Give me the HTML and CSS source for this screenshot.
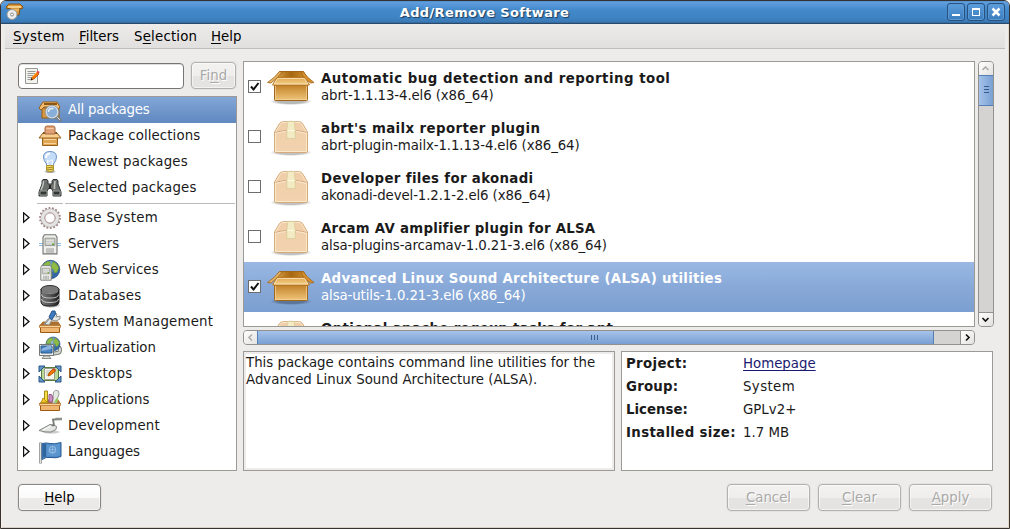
FILE: index.html
```html
<!DOCTYPE html>
<html lang="en">
<head>
<meta charset="utf-8">
<title>Add/Remove Software</title>
<link rel="stylesheet" href="styles.css">
</head>
<body>
<svg class="defs" width="0" height="0" aria-hidden="true">
  <defs>
    <linearGradient id="boxFront" x1="0" y1="0" x2="0" y2="1"><stop offset="0" stop-color="#c28127"/><stop offset="1" stop-color="#f0c67c"/></linearGradient>
    <linearGradient id="boxFlap" x1="0" y1="0" x2="0" y2="1"><stop offset="0" stop-color="#e0a84f"/><stop offset="1" stop-color="#f3cf8e"/></linearGradient>
    <linearGradient id="boxInside"><stop offset="0" stop-color="#dba04b"/><stop offset=".5" stop-color="#a5670f"/><stop offset="1" stop-color="#cf8d2e"/></linearGradient>
    <linearGradient id="paleFront" x1="0" y1="0" x2="0" y2="1"><stop offset="0" stop-color="#f1cda3"/><stop offset="1" stop-color="#f5d9ae"/></linearGradient>
    <radialGradient id="shadow"><stop offset=".6" stop-color="#000" stop-opacity=".35"/><stop offset="1" stop-color="#000" stop-opacity="0"/></radialGradient>
    <linearGradient id="metal"><stop offset="0" stop-color="#777"/><stop offset=".5" stop-color="#555"/><stop offset="1" stop-color="#1c1c1c"/></linearGradient>
    <radialGradient id="sea" cx=".4" cy=".3"><stop offset="0" stop-color="#a9caed"/><stop offset="1" stop-color="#3268a8"/></radialGradient>
    <symbol id="box-open" viewBox="0 0 48 36">
      <ellipse cx="24" cy="31.500" rx="21" ry="3.500" fill="url(#shadow)" opacity=".8"/>
      <path d="M7.500 15h33v14.500q0 1-1 1h-31q-1 0-1-1z" fill="url(#boxFront)" stroke="#a0661a"/>
      <path d="M8.500 16v13.500h31V16" fill="none" stroke="#f4d49c" stroke-opacity=".7"/>
      <path d="M12.500 1.500h24l3.500 6.500H8z" fill="url(#boxInside)" stroke="#a0661a"/>
      <path d="M12.500 1.500 7 7.500 .5 12.500l3.500 .5 6-5 5-6z" fill="#e6b362" stroke="#a0661a" stroke-width=".8"/>
      <path d="M36 1.500 41 7.500l6 5-3.500 .5-6.500-5-3-6z" fill="#d78f2b" stroke="#a0661a" stroke-width=".8"/>
      <path d="M10 7.500h28l4.500 7.500H5.500z" fill="url(#boxFlap)" stroke="#b67a2a"/>
      <path d="M10.500 8.500h27l3.300 5.500H7.200z" fill="none" stroke="#ffe4b2" stroke-opacity=".8"/>
    </symbol>
    <symbol id="box-closed" viewBox="0 0 48 36">
      <ellipse cx="24" cy="32.500" rx="21" ry="3.500" fill="url(#shadow)" opacity=".7"/>
      <path d="M7.500 12 12.500 3.500q1-1.500 3-1.700Q24 .8 32.500 1.800q2 .2 3 1.700L40.500 12v19q0 1.500-1.500 1.500H9q-1.500 0-1.500-1.500z" fill="url(#paleFront)" stroke="#d4ab7c"/>
      <path d="M8.500 12.500 13.500 4q.8-1.200 2.500-1.400 8-1 16 0 1.700 .2 2.500 1.400l5 8.500v19H8.500z" fill="#f0cdb0" fill-opacity=".5" stroke="#fae8cb"/>
      <path d="M8.500 12.500q5-1.500 11-2v2h9v-2q6 .5 11 2" fill="none" stroke="#d0a679"/>
      <path d="M8.500 13.500q5-1.500 11-2m9 0q6 .5 11 2" fill="none" stroke="#fbebd2"/>
      <path d="M20.800 1.500h6.400l1 9v8.500l-1-1-1 1-1.200-1-1 1-1-1-1.200 1-1-1-1 1V10.500z" fill="#f3ebc4" stroke="#d9cc9a" stroke-width=".8"/>
      <path d="M20.500 10.500h7" stroke="#fffbe2"/>
    </symbol>
    <symbol id="globe" viewBox="0 0 24 24">
      <circle cx="12" cy="12" r="10.500" fill="url(#sea)" stroke="#2b5388"/>
      <path d="M5 5q4-3 6-2l1 3-3 2-1 4-3-1-3 1q0-4 3-7zM15 3q5 2 6.500 7l-2 5-3 1-1-4-3-2 1-4zM8 14l5 1 1 4-3 3q-3-2-3-8z" fill="#8dbb45" stroke="#659028" stroke-width=".6"/>
    </symbol>
    <symbol id="server" viewBox="0 0 16 20" preserveAspectRatio="none">
      <path d="M1 3 2.500.7h11L15 3v16H1z" fill="#eeeeec" stroke="#73756f" stroke-width="1.100"/>
      <path d="M3 4h10v7H3z" fill="#c9ccc7" stroke="#8b8e88" stroke-width=".8"/>
      <path d="M4 6h8M4 8.500h8" stroke="#eee" stroke-width=".8"/><rect x="10" y="9" width="2" height="1.500" fill="#69a830"/>
      <path d="M5 13.500V18M7 13.500V18M9 13.500V18M11 13.500V18" stroke="#8b8e88" stroke-width=".9"/>
    </symbol>
    <symbol id="tray" viewBox="0 0 24 24">
      <path d="M5 12h15l2.500 4h-21z" fill="#a87235" stroke="#ad681c"/>
      <path d="M2.500 16h19v6.500h-19z" fill="#eeb670" stroke="#9c5911"/>
      <path d="M1.500 15.500h21v2h-21z" fill="#f9d29a" stroke="#b6732a" stroke-width=".7"/>
    </symbol>
  </defs>
</svg>

<div class="window">
  <header class="titlebar">
    <svg class="app-icon" width="18" height="18" viewBox="0 0 18 18">
      <path d="M3 1h11l3 3-1 2-2-1-1 7H5L4 5 1 6 0 4z" fill="#d9973c" stroke="#85500e"/><path d="M2 4h13" stroke="#ffe0a5" stroke-width="1.500"/><path d="M5 7h8" stroke="#ffd083"/>
      <circle cx="6" cy="11.500" r="5" fill="#ededed" stroke="#989898"/><circle cx="6" cy="11.500" r="1.500" fill="#fff" stroke="#888"/>
    </svg>
    <h1 class="title">Add/Remove Software</h1>
    <div class="controls">
      <span class="control"><svg width="16" height="16"><path d="M4 10h8v2H4z" fill="#fff"/></svg></span>
      <span class="control"><svg width="16" height="16"><path d="M4 4h8v8H4zm1 2v5h6V6z" fill="#fff" fill-rule="evenodd"/></svg></span>
      <span class="control"><svg width="16" height="16"><path d="m4.500 4.500 7 7m0-7-7 7" stroke="#fff" stroke-width="2.500"/></svg></span>
    </div>
  </header>

  <nav class="menubar">
    <span class="menu-system wide-3"><u>S</u>ystem</span><span class="menu-filters"><u>F</u>ilters</span><span class="menu-selection wide-2">S<u>e</u>lection</span><span><u>H</u>elp</span>
  </nav>

  <main class="content">
    <aside class="left">
      <div class="search">
        <div class="entry">
          <svg width="16" height="16" viewBox="0 0 16 16"><path d="M1.500.500h12v15h-12z" fill="#f2f2ef" stroke="#989992"/><path d="M3.500 3.500h8M3.500 5.500h8M3.500 7.500h7M3.500 9.500h5M3.500 11.500h3" stroke="#9b9b98"/><path d="m7 12 1-3 5-5 2 2-5 5z" fill="#f57900" stroke="#b64800" stroke-width=".7"/><path d="m8 9 5-5" stroke="#ffc055"/><path d="m12.500 4 1-1q2-.5 2 1.800l-1 1z" fill="#e2444c"/><path d="m6.500 12.500.8-2.500 1.500 1.500z" fill="#222"/></svg>
        </div>
        <button class="button disabled find">Fi<u>n</u>d</button>
      </div>
      <ul class="groups">
        <li class="group selected"><i class="arrow none"></i>
          <svg width="24" height="24" viewBox="0 0 24 24"><path d="M4 10h17v10H4z" fill="#d79743" stroke="#98610e"/><path d="M5 4h14l3 5-2 2-2-2H6l-3 3-2-2z" fill="#f0bd71" stroke="#9a5e13"/><path d="M6 6h13" stroke="#8e5814" stroke-width="2"/><path d="m18 18 5 5" stroke="#7b7e7a" stroke-width="3"/><path d="m18 18 4 4" stroke="#ddd"/><circle cx="14" cy="14" r="6" fill="#88afd8" stroke="#d7dce2" stroke-width="1.700"/><circle cx="14" cy="14" r="6.800" fill="none" stroke="#6c7f91" stroke-width=".6"/><path d="M10.500 14q0-4 5-3.500" fill="none" stroke="#e7f1fc" stroke-width="1.500"/></svg>
          <span class="tight-2">All packages</span></li>
        <li class="group"><i class="arrow none"></i>
          <svg width="24" height="24" viewBox="0 0 24 24"><path d="M4.500 13h15v8.500h-15z" fill="#dfa754" stroke="#94601a"/><path d="m5 9-4 5h22l-4-5z" fill="#f9cf8f" stroke="#95601d"/><path d="M5 9h14" stroke="#805119" stroke-width="2"/><path d="M7 4q0-2 2-2h6q2 0 2 2v6H7z" fill="#dfa276" stroke="#a86b41"/><path d="M8.500 4.500h7" stroke="#f5c9a9"/><path d="M6 15.500h12M6 19.500h12" stroke="#f7d59c"/></svg>
          <span class="wide-1">Package collections</span></li>
        <li class="group"><i class="arrow none"></i>
          <svg width="24" height="24" viewBox="0 0 24 24"><ellipse cx="12" cy="21.500" rx="6" ry="2" fill="url(#shadow)"/><path d="M8.500 14Q5.500 10.500 5.500 7q0-5.500 6.500-5.500T18.500 7q0 3.500-3 7v2h-7z" fill="#c4dcf7" stroke="#6e96c8"/><path d="M8 8q0-4 4-4.500" stroke="#fff" stroke-width="2" fill="none"/><path d="m10 15-.5-5 2 1.500L13.500 10l1 0-.5 5" fill="none" stroke="#fff"/><path d="M8.500 15.500h7v5q-3.500 2.500-7 0z" fill="#f2dd69" stroke="#b3942b"/><path d="m9 18 6-1M9 20l6-1" stroke="#9e8020"/></svg>
          <span class="wide-2">Newest packages</span></li>
        <li class="group"><i class="arrow none"></i>
          <svg width="24" height="24" viewBox="0 0 24 24"><path d="M4 8V5l1-1.500h4L10 5v3h4V5l1-1.500h4L20 5v3l3 8v4h-8v-5l-2-3h-2l-2 3v5H1v-4z" fill="#6c706c" stroke="#2e3436"/><path d="M2 15h7v4H2zm13 0h7v4h-7z" fill="#333835" stroke="#999d99"/><path d="m5.500 5-.5 4-2 5M17 5l-.5 5 0 3" fill="none" stroke="#c0c4be" stroke-width="1.500"/><path d="M11 9h2v4h-2z" fill="#242825"/></svg>
          <span class="wide-2">Selected packages</span></li>
        <li class="separator"><i></i><i></i></li>
        <li class="group"><i class="arrow"></i>
          <svg width="24" height="24" viewBox="0 0 24 24"><circle cx="12" cy="12" r="9.400" fill="none" stroke="#a27f7f" stroke-width="3" stroke-dasharray="1.650 1.630"/><circle cx="12" cy="12" r="7.300" fill="#fff" stroke="#a5a7a4" stroke-width="4.500"/><circle cx="12" cy="12" r="7.300" fill="none" stroke="#e5e4e3" stroke-width="3.300"/><circle cx="12" cy="12" r="5" fill="#fff" stroke="#b39090" stroke-width=".8"/></svg>
          <span class="wide-3">Base System</span></li>
        <li class="group"><i class="arrow"></i>
          <svg width="24" height="24" viewBox="0 0 24 24"><path d="M1 11.500h22M1 13.500h22" stroke="#91bde4"/><use href="#server" x="4" y="2" width="16" height="21"/></svg>
          <span class="wide-1">Servers</span></li>
        <li class="group"><i class="arrow"></i>
          <svg width="24" height="24" viewBox="0 0 24 24"><use href="#globe" x="2" y="1" width="21" height="21"/><use href="#server" x="2" y="7" width="12" height="16"/></svg>
          <span class="wide-1">Web Services</span></li>
        <li class="group"><i class="arrow"></i>
          <svg width="24" height="24" viewBox="0 0 24 24"><ellipse cx="13" cy="21" rx="10" ry="3" fill="url(#shadow)"/><path d="M3 5v13q0 4 9 4t9-4V5z" fill="url(#metal)" stroke="#222"/><ellipse cx="12" cy="5.500" rx="9" ry="4" fill="#797979" stroke="#303030"/><path d="M3.500 10.500q0 3.500 8.500 3.500t8.500-3.500M3.500 15q0 3.500 8.500 3.500t8.500-3.500" fill="none" stroke="#ddd" stroke-width=".8"/><path d="M4 7.500q2 2 8 2t8-2" fill="none" stroke="#bbb" stroke-width=".7"/></svg>
          <span class="wide-3">Databases</span></li>
        <li class="group"><i class="arrow"></i>
          <svg width="24" height="24" viewBox="0 0 24 24"><use href="#tray" width="24" height="24"/><path d="m6 14 4-5 5-3 2-3 2 1-1 3 4-1v3l-4 2-4-1-3 5z" fill="#e5e6e3" stroke="#8c908b"/><path d="m11 7 3-6 3 0 .5 3-4 6z" fill="#3e7abd" stroke="#255590"/><path d="m12 8-5 6" stroke="#7c8181"/></svg>
          <span class="wide-2">System Management</span></li>
        <li class="group"><i class="arrow"></i>
          <svg width="24" height="24" viewBox="0 0 24 24"><path d="m13 18 6-1q3 0 3-3t-3-3" fill="none" stroke="#777d77" stroke-width="4"/><path d="m13 18 6-1q3 0 3-3t-3-3" fill="none" stroke="#d1d5cf" stroke-width="2"/><use href="#globe" x="7" y="0" width="16" height="16"/><path d="M1.500 8.500h14v11h-14z" fill="#eeeeec" stroke="#737873"/><path d="M3 10h11v7H3z" fill="#4784c3" stroke="#24588d"/><path d="m3.500 13 6-3h4v3l-10 2z" fill="#8cb3dd"/><path d="M6 20h5l2 2.500H4z" fill="#dcddd9" stroke="#888d87"/></svg>
          <span>Virtualization</span></li>
        <li class="group"><i class="arrow"></i>
          <svg width="24" height="24" viewBox="0 0 24 24"><path d="M3.500 5.500h17v13h-17z" fill="#b8d897" stroke="#587c3d"/><path d="M1 4h6L1 10zM23 4h-6l6 6zM1 20v-6l6 6zM23 20h-6l6-6z" fill="#6594c9" stroke="#295687"/><path d="M6.500 6.500h10v11h-10z" fill="#f4f4ee" stroke="#989d8c"/><path d="M8 9h6M8 11h4M8 13h3" stroke="#b9bbb5"/><path d="m10 14 1-3 4-4 2.500 2-5 4z" fill="#f57900" stroke="#b75800"/><path d="m15 7 1-1 2 2-1 1z" fill="#d23d3c"/></svg>
          <span class="wide-3">Desktops</span></li>
        <li class="group"><i class="arrow"></i>
          <svg width="24" height="24" viewBox="0 0 24 24"><use href="#tray" width="24" height="24"/><path d="M6.500 3h3v12h-3z" fill="#f3df45" stroke="#a78b14"/><path d="m14.500 15 1-11q2-3 5-1l.5 3-3 9z" fill="#e5e9e3" stroke="#989d96"/><path d="M13.500 6.500h-2.500V14h3l1-4z" fill="#cc91c0" stroke="#93598b"/><path d="m16 14 2.500-4 2 1-1.500 4z" fill="#97c961"/><path d="m3 15 2-5 4 4z" fill="#f6c928" stroke="#bd9310"/></svg>
          <span>Applications</span></li>
        <li class="group"><i class="arrow"></i>
          <svg width="24" height="24" viewBox="0 0 24 24"><ellipse cx="13" cy="18" rx="10" ry="2" fill="url(#shadow)" opacity=".6"/><path d="M1 16.500 12 10.500l4 .5 2.500 1.500-.5 3-5 2.500q-6 .5-12-1.500z" fill="#e4e5e1" stroke="#81857f"/><path d="m13 12.500 3-1.500-1-5.500 7-.5" fill="none" stroke="#777b76" stroke-width="1.800"/><path d="M17.500 5H24" stroke="#8b908a" stroke-width="2.500"/><path d="m5 16 8-4 2 1.500" stroke="#fff" fill="none"/></svg>
          <span class="wide-2">Development</span></li>
        <li class="group"><i class="arrow"></i>
          <svg width="24" height="24" viewBox="0 0 24 24"><path d="M2.500 2.500v21" stroke="#828783" stroke-width="2.500"/><path d="M2.500 3v20" stroke="#dfe2df"/><path d="M4 3.500q4-1 8 0t11-1v14q-5 2-10 1t-9 2z" fill="#4e89c4" stroke="#275b94"/><path d="M5 4h3v13H5z" fill="#2e659e"/><path d="M9 4.500q7 1 13-1v12q-6 1-13 0z" fill="#5a94ce"/><circle cx="14.500" cy="9.500" r="3.200" fill="none" stroke="#a3c6e8" stroke-width=".8"/><path d="M11.500 9.500h6M14.500 6.500v6M10.500 11q4 4.500 8 0" fill="none" stroke="#a3c6e8" stroke-width=".6"/></svg>
          <span class="tight-1">Languages</span></li>
      </ul>
    </aside>

    <section class="right">
      <div class="list-area">
        <ul class="packages">
          <li class="package"><i class="check on"><svg width="11" height="11"><path d="m2 5.500 2.500 3L9.500 2" fill="none" stroke="#111" stroke-width="2"/></svg></i><svg class="box" width="48" height="36"><use href="#box-open"/></svg><div><b class="wide-5">Automatic bug detection and reporting tool</b><p>abrt-1.1.13-4.el6 (x86_64)</p></div></li>
          <li class="package"><i class="check"></i><svg class="box" width="48" height="36"><use href="#box-closed"/></svg><div><b class="wide-4">abrt's mailx reporter plugin</b><p>abrt-plugin-mailx-1.1.13-4.el6 (x86_64)</p></div></li>
          <li class="package"><i class="check"></i><svg class="box" width="48" height="36"><use href="#box-closed"/></svg><div><b class="wide-3">Developer files for akonadi</b><p>akonadi-devel-1.2.1-2.el6 (x86_64)</p></div></li>
          <li class="package"><i class="check"></i><svg class="box" width="48" height="36"><use href="#box-closed"/></svg><div><b class="wide-25">Arcam AV amplifier plugin for ALSA</b><p>alsa-plugins-arcamav-1.0.21-3.el6 (x86_64)</p></div></li>
          <li class="package selected"><i class="check on"><svg width="11" height="11"><path d="m2 5.500 2.500 3L9.500 2" fill="none" stroke="#111" stroke-width="2"/></svg></i><svg class="box" width="48" height="36"><use href="#box-open"/></svg><div><b class="wide-28">Advanced Linux Sound Architecture (ALSA) utilities</b><p>alsa-utils-1.0.21-3.el6 (x86_64)</p></div></li>
          <li class="package"><i class="check"></i><svg class="box" width="48" height="36"><use href="#box-closed"/></svg><div><b class="wide-3">Optional apache regexp tasks for ant</b></div></li>
        </ul>
        <div class="vscroll">
          <span class="step up"><svg width="13" height="13"><path d="M3.500 8 6.500 5l3 3" fill="none" stroke="#aaa9a6" stroke-width="1.500"/></svg></span>
          <span class="vthumb"><i></i><i></i><i></i></span>
          <span class="step down"><svg width="13" height="13"><path d="m3.500 5 3 3 3-3" fill="none" stroke="#111" stroke-width="1.600"/></svg></span>
        </div>
      </div>
      <div class="hscroll">
        <span class="step left-step"><svg width="13" height="13"><path d="m8 3.500-3 3 3 3" fill="none" stroke="#aaa9a6" stroke-width="1.500"/></svg></span>
        <span class="hthumb"><i></i><i></i><i></i></span>
        <span class="step right-step"><svg width="13" height="13"><path d="m5 3.500 3 3-3 3" fill="none" stroke="#111" stroke-width="1.600"/></svg></span>
      </div>
      <div class="info">
        <p class="description">This package contains command line utilities for the<br>Advanced Linux Sound Architecture (ALSA).</p>
        <dl class="details">
          <dt class="wide-3">Project:</dt><dd><a class="link">Homepage</a></dd>
          <dt class="wide-2">Group:</dt><dd class="wide-4">System</dd>
          <dt>License:</dt><dd>GPLv2+</dd>
          <dt class="wide-3">Installed size:</dt><dd>1.7 MB</dd>
        </dl>
      </div>
    </section>
  </main>

  <footer class="actions">
    <button class="button"><u>H</u>elp</button>
    <span class="spacer"></span>
    <button class="button disabled"><u>C</u>ancel</button>
    <button class="button disabled"><u>C</u>lear</button>
    <button class="button disabled"><u>A</u>pply</button>
  </footer>
</div>
</body>
</html>
```
FILE: styles.css
```css
* { box-sizing: border-box; }
html, body { margin: 0; padding: 0; }
body {
  width: 1010px;
  height: 529px;
  overflow: hidden;
  background: #fff;
  font: 13.333px/17px "DejaVu Sans", sans-serif;
  color: #1a1a1a;
}
ul, dl, dd, p, h1 { margin: 0; padding: 0; list-style: none; }
.defs { position: absolute; }
svg { display: block; flex: none; }
u { text-decoration: underline; text-underline-offset: 2px; text-decoration-thickness: 1px; text-decoration-skip-ink: none; }

/* Tracking steps */
.tight-2 { letter-spacing: -.2px; }
.tight-1 { letter-spacing: -.1px; }
.wide-1 { letter-spacing: .1px; }
.wide-2 { letter-spacing: .2px; }
.wide-25 { letter-spacing: .26px; }
.wide-28 { letter-spacing: .29px; }
.wide-3 { letter-spacing: .34px; }
.wide-4 { letter-spacing: .4px; }
.wide-5 { letter-spacing: .5px; }

.window {
  width: 1010px;
  height: 529px;
  display: flex;
  flex-direction: column;
  background: #edeceb;
  border: 1px solid #37322f;
  border-radius: 6px 6px 0 0;
  box-shadow: inset 1px 0 #f5efe8, inset -1px 0 #e5d8ca, inset 0 -1px #d6d0c8;
  overflow: hidden;
}
.titlebar {
  display: flex;
  align-items: center;
  height: 23px;
  flex: none;
  padding: 0 4px 0 5px;
  background: linear-gradient(#4a84c4 0, #5f9fdf 1px, #5696d8 4px, #4389ca 9px, #3e83c3 17px, #3b79b4 21px, #31608f 22px);
  border-bottom: 1px solid #2a4a6c;
}
.app-icon { width: 18px; }
.title {
  flex: 1;
  padding-right: 2px;
  text-align: center;
  font-size: 13px;
  line-height: 22px;
  padding-top: 1px;
  letter-spacing: .36px;
  color: #fff;
  text-shadow: 1px 1px 1px #1c3a5b;
}
.controls { display: flex; gap: 2px; }
.control {
  width: 18px;
  height: 18px;
  border: 1px solid #28517e;
  border-radius: 3px;
  background: linear-gradient(#5c9ddd, #3a7dbc);
  box-shadow: inset 0 0 0 1px #5a98d3;
}
.menubar {
  display: flex;
  height: 25px;
  flex: none;
  margin: 0 4px;
  padding: 4px 0 0 8px;
  background: linear-gradient(#edecea, #e1e0de);
  border-bottom: 1px solid #bfbebb;
  color: #000;
}
.menu-system { width: 66px; }
.menu-filters { width: 55px; }
.menu-selection { width: 77px; }
.content {
  display: flex;
  gap: 6px;
  height: 410px;
  flex: none;
  padding: 12px 0 0 16px;
}
.left { width: 220px; }
.search { display: flex; justify-content: space-between; padding: 1px 1px 0; height: 35px; }
.entry {
  width: 166px;
  height: 26px;
  margin-top: 1px;
  padding: 4px 5px;
  background: #fff;
  border: 1px solid #767573;
  border-radius: 4px;
  box-shadow: inset 0 1px #dededc;
}
.button {
  width: 83px;
  height: 27px;
  padding: 0 0 1px;
  font: inherit;
  color: #000;
  border: 1px solid #898784;
  border-radius: 4px;
  background: linear-gradient(#fff, #fafafa 50%, #ecebe9 51%, #e9e8e6);
  box-shadow: 0 0 0 1px #e4e3e1, inset 0 0 0 1px #fff8;
}
.disabled {
  color: #aaa9a7;
  border-color: #b1b0ae;
  background: linear-gradient(#f3f2f1, #efeeed 50%, #e5e4e2 51%, #e4e3e1);
  text-shadow: 1px 1px #fff;
}
.find { width: 45px; }
.groups, .packages, .description, .details { background: #fff; border: 1px solid #9c9a97; }
.groups { height: 375px; }
.group { display: flex; align-items: center; height: 26px; padding-bottom: 1px; }
.group > svg { margin: 1px 6px 0 0; }
.group.selected { color: #fff; background: linear-gradient(#82a6d7, #6089c0); }
.arrow { width: 20px; height: 12px; flex: none; }
.arrow::before {
  content: "";
  display: block;
  width: 7px;
  height: 12px;
  margin-left: 5px;
  background: #111;
  clip-path: polygon(0 0, 100% 50%, 0 100%, 0 0, 1.200px 2.800px, 1.200px 9.200px, 5px 6px, 1.200px 2.800px);
}
.none { visibility: hidden; }
.separator { display: flex; gap: 2px; height: 4px; padding: 2px 1px 0 19px; }
.separator i { width: 26px; height: 1px; background: #bcbbb8; }
.separator i + i { flex: 1; }
.right { width: 751px; }
.list-area { display: flex; gap: 3px; height: 266px; }
.packages { width: 732px; overflow: hidden; }
.package { display: flex; height: 50px; padding-left: 4px; }
.package.selected { color: #fff; background: linear-gradient(#99b8e3, #88a9d8 50%, #7b9fd0); }
.package b, .package p { display: block; line-height: 17px; white-space: nowrap; }
.package p { letter-spacing: -.11px; }
.package > div { padding-top: 8px; }
.check { width: 13px; height: 13px; margin-top: 18px; border: 1px solid #6e6d6b; background: #fff; flex: none; }
.box { margin: 8px 6px 0 6px; }
.vscroll { width: 16px; height: 266px; border: 1px solid #93918e; border-radius: 4px; background: #d4d3d1; display: flex; flex-direction: column; overflow: hidden; }
.step { width: 14px; height: 14px; flex: none; background: linear-gradient(135deg, #fff, #e2e1de); }
.vscroll .up { height: 13px; }
.vscroll .down { margin-top: auto; border-top: 1px solid #93918e; }
.vthumb { height: 31px; flex: none; border: 1px solid #5680b5; background: linear-gradient(90deg, #a5c3eb, #799fd2); margin: 0 -1px; padding-top: 10px; display: flex; flex-direction: column; gap: 2px; align-items: center; }
.vthumb i { width: 5px; height: 1px; background: #385d8e; }
.hscroll { display: flex; width: 732px; height: 15px; margin-top: 3px; border: 1px solid #93918e; border-radius: 4px; background: #d4d3d1; overflow: hidden; }
.hthumb { width: 677px; flex: none; margin: -1px 0; padding-right: 2px; border: 1px solid #5680b5; background: linear-gradient(#a5c3eb, #799fd2); display: flex; gap: 2px; justify-content: center; align-items: center; }
.hthumb i { width: 1px; height: 5px; background: #385d8e; }
.left-step { width: 13px; }
.right-step { margin-left: auto; border-left: 1px solid #93918e; }
.info { display: flex; gap: 6px; margin-top: 6px; }
.description { width: 372px; height: 120px; padding: 2px; white-space: nowrap; box-shadow: inset 0 0 0 2px #edecea; }
.details { width: 372px; height: 120px; display: grid; grid-template-columns: 117px 1fr; grid-auto-rows: 23px; padding: 3px 4px; align-content: start; }
.details dt { font-weight: bold; white-space: nowrap; }
.link { color: #1a1a70; text-decoration: underline; text-underline-offset: 2px; text-decoration-skip-ink: none; }
.actions { display: flex; gap: 8px; padding: 25px 17px 0 17px; height: 69px; }
.spacer { flex: 1; }
```
